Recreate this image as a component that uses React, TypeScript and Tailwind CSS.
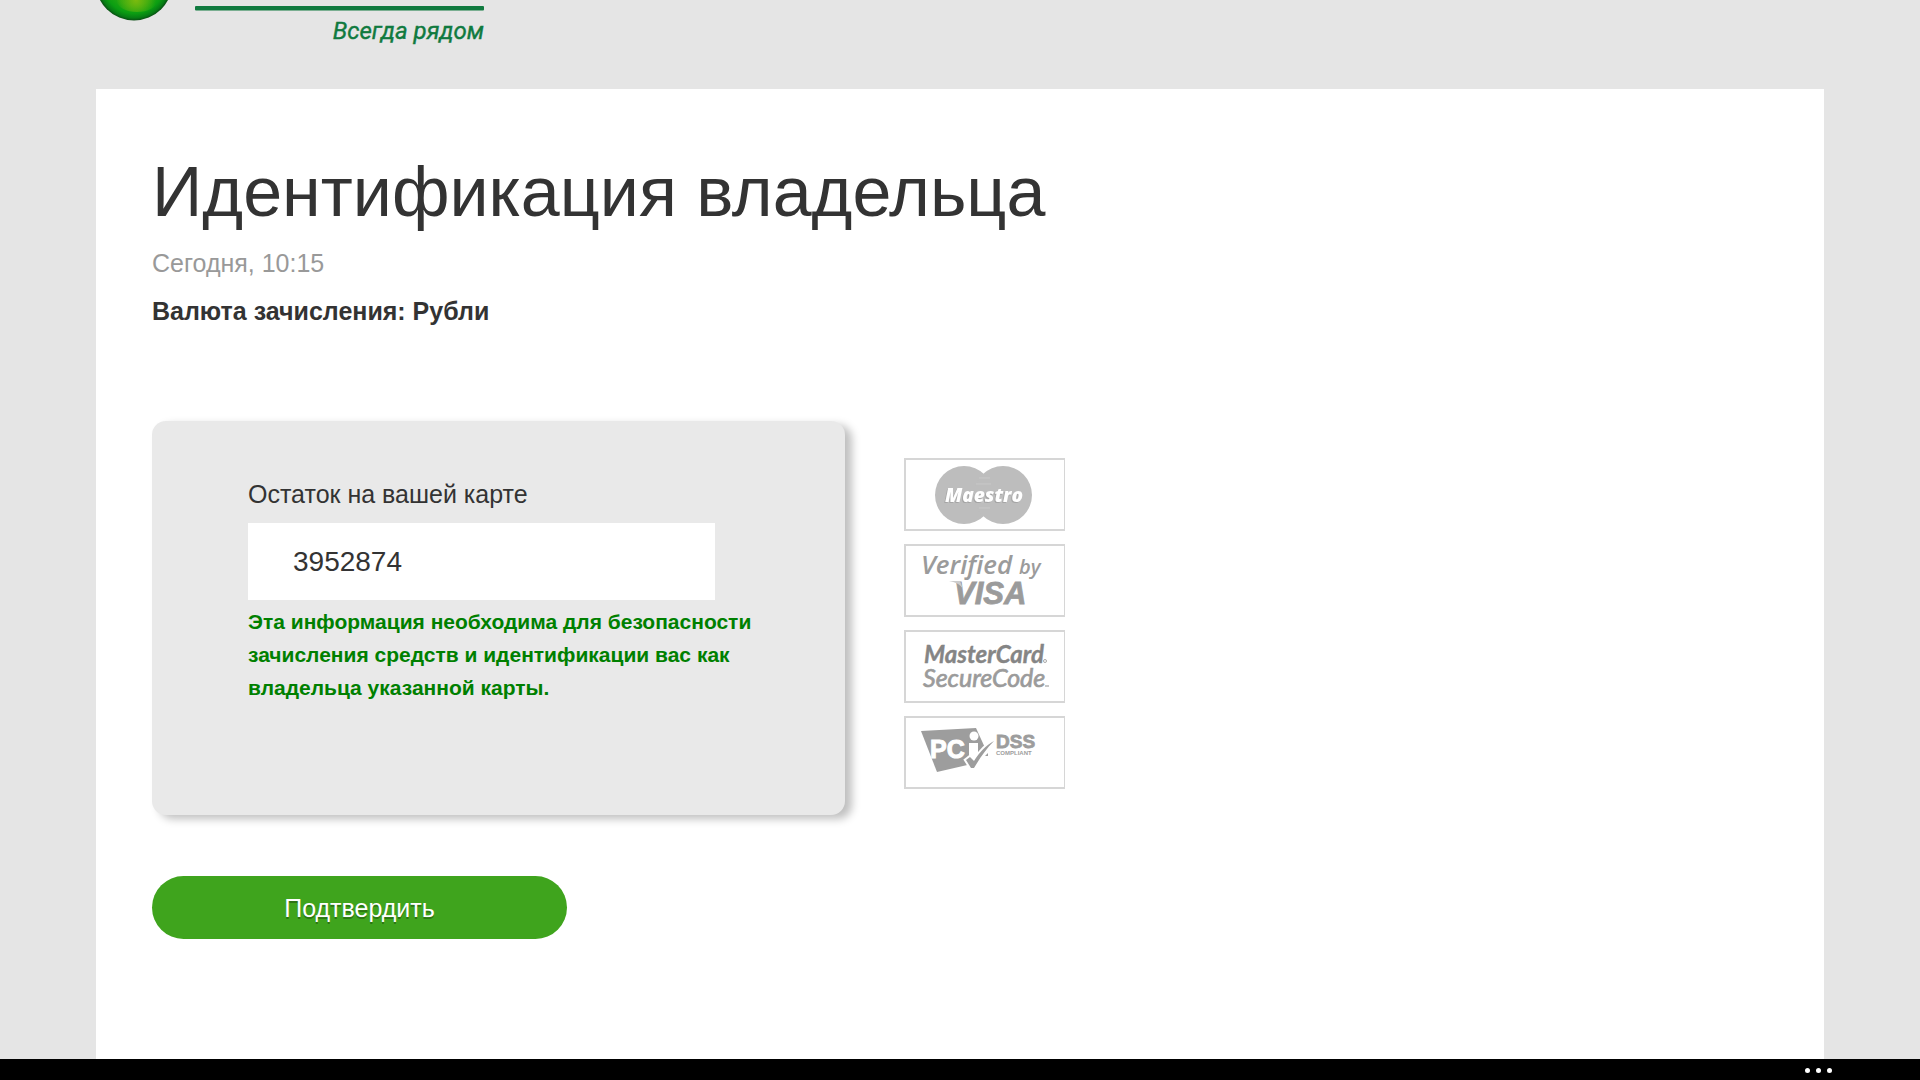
import React, { useState } from 'react';

const Logo = () => (
  <svg className="block h-[52px] w-[400px]" viewBox="96 0 400 52" role="img" aria-label="Всегда рядом">
    <defs>
      <radialGradient id="ball" cx="134" cy="-18" r="39" gradientUnits="userSpaceOnUse">
        <stop offset="0" stopColor="#3cae10" />
        <stop offset="0.6" stopColor="#22a612" />
        <stop offset="0.8" stopColor="#0b9e12" />
        <stop offset="0.92" stopColor="#067d14" />
        <stop offset="1" stopColor="#0a4412" />
      </radialGradient>
      <radialGradient id="glow" cx="136" cy="0" r="20" gradientUnits="userSpaceOnUse">
        <stop offset="0" stopColor="#7cbb0e" />
        <stop offset="1" stopColor="#7cbb0e" stopOpacity="0" />
      </radialGradient>
    </defs>
    <circle cx="134" cy="-18" r="38.5" fill="url(#ball)" />
    <ellipse cx="137" cy="1" rx="20" ry="11" fill="url(#glow)" />
    <rect x="195" y="6" width="289" height="4.5" rx="1" fill="#107a3f" />
    <text x="484" y="39" textAnchor="end" fill="#107a3f" stroke="#107a3f" strokeWidth="0.4" fontSize="24" fontStyle="italic" fontFamily="Roboto, sans-serif">
      Всегда рядом
    </text>
  </svg>
);

const Maestro = () => (
  <>
    <circle cx="60" cy="37" r="29" fill="#bdbdbd" />
    <circle cx="99" cy="37" r="29" fill="#bdbdbd" />
    <path d="M75 20h11M72 26h15M75 50h11M72 44h12" stroke="#c8c8c8" strokeWidth="1" />
    <text
      x="80"
      y="44"
      textAnchor="middle"
      fill="#ffffff"
      fontFamily="'Open Sans', sans-serif"
      fontSize="19"
      fontWeight="800"
      fontStyle="italic"
      className="[filter:drop-shadow(-1px_1px_0_#a5a5a5)]"
    >
      Maestro
    </text>
  </>
);

const VerifiedByVisa = () => (
  <g fontFamily="'Open Sans', sans-serif" fontStyle="italic" fontWeight="600" fill="#9b9b9b">
    <text x="17" y="30" fontSize="26">Verified</text>
    <text x="115" y="30" fontSize="20">by</text>
    <text x="50" y="60" fontSize="31" fontWeight="700" fontFamily="'Liberation Sans', Arial, sans-serif" stroke="#9b9b9b" strokeWidth="0.8">VISA</text>
    <path d="M45 37h11l3 8c-3-5-8-7-14-8z" fill="#cccccc" />
  </g>
);

const SecureCode = () => (
  <g fontFamily="Lato, sans-serif" fontStyle="italic">
    <text x="20" y="33" fontSize="24" fontWeight="700" fill="#858585" stroke="#858585" strokeWidth="0.4">MasterCard</text>
    <text x="19" y="57" fontSize="25" fill="#9b9b9b" stroke="#9b9b9b" strokeWidth="0.7">SecureCode</text>
    <circle cx="141" cy="31" r="1.5" fill="none" stroke="#a8a8a8" />
    <path d="M141 56h4" stroke="#b4b4b4" strokeWidth="1.5" />
  </g>
);

const PciDss = () => (
  <g fontFamily="'Liberation Sans', Arial, sans-serif" fontWeight="700">
    <path d="M17 15 72 12 82 34 72 47 33 56Z" fill="#9d9d9d" />
    <text x="26" y="42" fontSize="25" fill="#ffffff" stroke="#ffffff" strokeWidth="1">PC</text>
    <circle cx="70" cy="20" r="4.5" fill="#ffffff" />
    <path d="M65 27h9v15h-9z" fill="#ffffff" />
    <path d="M62 44 66 41 70 45C75 37 82 29 90 25 82 33 76 42 70 52H67Z" fill="#9d9d9d" stroke="#ffffff" strokeWidth="4" paintOrder="stroke" />
    <path d="M81 40l3-3v3z" fill="#9d9d9d" />
    <text x="92" y="32" fontSize="19" fill="#9d9d9d" stroke="#9d9d9d" strokeWidth="0.8">DSS</text>
    <text x="92" y="39" fontSize="6" fill="#9d9d9d">COMPLIANT</text>
  </g>
);

const badges = [
  { name: 'Maestro', Art: Maestro },
  { name: 'Verified by Visa', Art: VerifiedByVisa },
  { name: 'MasterCard SecureCode', Art: SecureCode },
  { name: 'PCI DSS Compliant', Art: PciDss },
];

const App = () => {
  const [balance, setBalance] = useState('3952874');

  return (
    <div className="flex min-h-screen flex-col bg-[#e5e5e5] font-['Liberation_Sans',Arial,sans-serif] text-[25px] leading-[40px] text-[#333333]">
      <header className="h-[89px] px-[5%]">
        <Logo />
      </header>

      <main className="mx-[5%] grow bg-white px-14 pt-[61px] pb-16">
        <h1 className="text-[70px] leading-[84px]">Идентификация владельца</h1>
        <p className="mt-[9px] text-[#999999]">Сегодня, 10:15</p>
        <p className="mt-2 font-bold">Валюта зачисления: Рубли</p>

        <form onSubmit={(e) => e.preventDefault()}>
          <div className="mt-[90px] flex items-start gap-[59px]">
            <section className="w-full max-w-[693px] rounded-[14px] bg-[#e9e9e9] pt-[53px] pr-12 pb-[111px] pl-24 shadow-[7px_4px_8px_rgba(0,0,0,0.25)]">
              <label htmlFor="balance" className="block">Остаток на вашей карте</label>
              <input
                id="balance"
                type="text"
                value={balance}
                onChange={(e) => setBalance(e.target.value)}
                className="mt-[9px] block h-[77px] w-full max-w-[467px] bg-white px-[45px] text-[28px] outline-none"
              />
              <p className="mt-[5px] text-[21px] leading-[33px] font-bold text-[#008000]">
                Эта информация необходима для безопасности зачисления средств и идентификации вас как владельца указанной карты.
              </p>
            </section>

            {/* Payment system badges */}
            <ul className="mt-[37px] flex flex-col gap-[13px]">
              {badges.map(({ name, Art }) => (
                <li key={name} className="h-[73px] w-[161px] border-2 border-r border-[#d6d6d6]">
                  <svg className="block h-full w-full" viewBox="2 2 158 69" role="img" aria-label={name}>
                    <Art />
                  </svg>
                </li>
              ))}
            </ul>
          </div>

          <button
            type="submit"
            className="mt-[61px] block h-[63px] w-full max-w-[415px] rounded-full bg-[#3fa41d] text-white [text-shadow:0_2px_0_rgba(0,0,0,0.3)]"
          >
            Подтвердить
          </button>
        </form>
      </main>

      <footer className="flex h-[21px] justify-end bg-black px-[88px]">
        <button type="button" aria-label="Ещё" className="flex h-full items-center gap-[6px] pt-[2px]">
          <span className="size-[5px] rounded-full bg-white" />
          <span className="size-[5px] rounded-full bg-white" />
          <span className="size-[5px] rounded-full bg-white" />
        </button>
      </footer>
    </div>
  );
};

export default App;
